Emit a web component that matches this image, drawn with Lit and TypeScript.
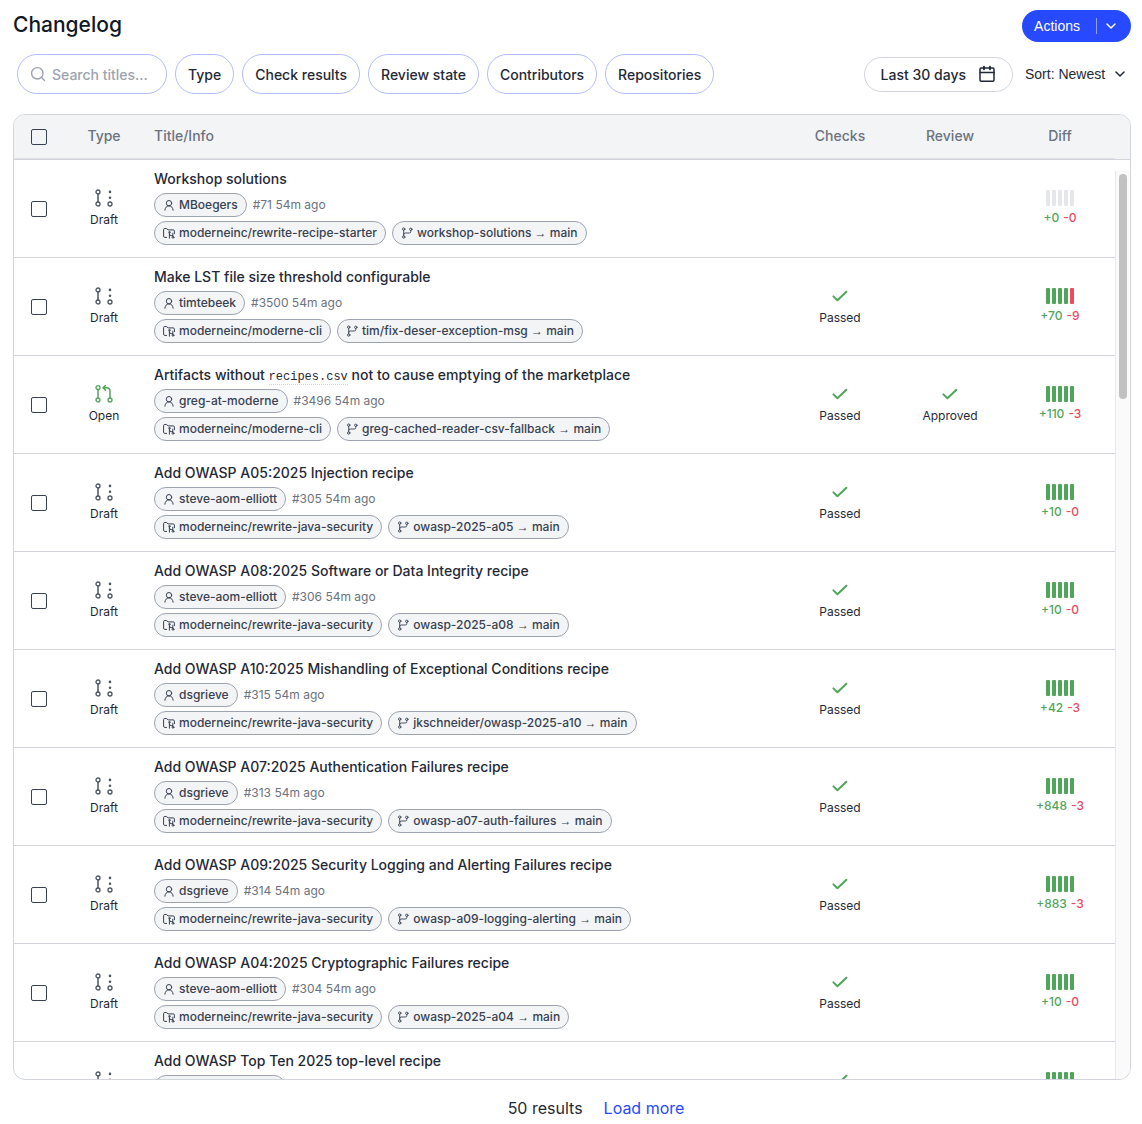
import { LitElement, html, css, svg, nothing, TemplateResult } from 'lit';
import { customElement, property } from 'lit/decorators.js';
import { classMap } from 'lit/directives/class-map.js';

interface Change {
  title: string | TemplateResult;
  type: 'Draft' | 'Open';
  author: string;
  number: number;
  repo: string;
  branch: string;
  checks?: string;
  review?: string;
  added: number;
  removed: number;
  bars: string; // one letter per bar: g = added, r = removed, n = neutral
}

const JAVA_SECURITY = 'moderneinc/rewrite-java-security';

const CHANGES: Change[] = [
  { title: 'Workshop solutions', type: 'Draft', author: 'MBoegers', number: 71, repo: 'moderneinc/rewrite-recipe-starter', branch: 'workshop-solutions', added: 0, removed: 0, bars: 'nnnnn' },
  { title: 'Make LST file size threshold configurable', type: 'Draft', author: 'timtebeek', number: 3500, repo: 'moderneinc/moderne-cli', branch: 'tim/fix-deser-exception-msg', checks: 'Passed', added: 70, removed: 9, bars: 'ggggr' },
  { title: html`Artifacts without <code>recipes.csv</code> not to cause emptying of the marketplace`, type: 'Open', author: 'greg-at-moderne', number: 3496, repo: 'moderneinc/moderne-cli', branch: 'greg-cached-reader-csv-fallback', checks: 'Passed', review: 'Approved', added: 110, removed: 3, bars: 'ggggg' },
  { title: 'Add OWASP A05:2025 Injection recipe', type: 'Draft', author: 'steve-aom-elliott', number: 305, repo: JAVA_SECURITY, branch: 'owasp-2025-a05', checks: 'Passed', added: 10, removed: 0, bars: 'ggggg' },
  { title: 'Add OWASP A08:2025 Software or Data Integrity recipe', type: 'Draft', author: 'steve-aom-elliott', number: 306, repo: JAVA_SECURITY, branch: 'owasp-2025-a08', checks: 'Passed', added: 10, removed: 0, bars: 'ggggg' },
  { title: 'Add OWASP A10:2025 Mishandling of Exceptional Conditions recipe', type: 'Draft', author: 'dsgrieve', number: 315, repo: JAVA_SECURITY, branch: 'jkschneider/owasp-2025-a10', checks: 'Passed', added: 42, removed: 3, bars: 'ggggg' },
  { title: 'Add OWASP A07:2025 Authentication Failures recipe', type: 'Draft', author: 'dsgrieve', number: 313, repo: JAVA_SECURITY, branch: 'owasp-a07-auth-failures', checks: 'Passed', added: 848, removed: 3, bars: 'ggggg' },
  { title: 'Add OWASP A09:2025 Security Logging and Alerting Failures recipe', type: 'Draft', author: 'dsgrieve', number: 314, repo: JAVA_SECURITY, branch: 'owasp-a09-logging-alerting', checks: 'Passed', added: 883, removed: 3, bars: 'ggggg' },
  { title: 'Add OWASP A04:2025 Cryptographic Failures recipe', type: 'Draft', author: 'steve-aom-elliott', number: 304, repo: JAVA_SECURITY, branch: 'owasp-2025-a04', checks: 'Passed', added: 10, removed: 0, bars: 'ggggg' },
  { title: 'Add OWASP Top Ten 2025 top-level recipe', type: 'Draft', author: 'steve-aom-elliott', number: 303, repo: JAVA_SECURITY, branch: 'owasp-2025-top-ten', checks: 'Passed', added: 10, removed: 0, bars: 'ggggg' },
];

const FILTERS = ['Type', 'Check results', 'Review state', 'Contributors', 'Repositories'];

const ICONS: Record<string, { size: number; stroke: number; body: TemplateResult }> = {
  search: {
    size: 16,
    stroke: 1.4,
    body: svg`<circle cx="7.3" cy="7.3" r="5.7" /><path d="M11.5 11.5l3 3" />`,
  },
  calendar: {
    size: 18,
    stroke: 1.5,
    body: svg`<rect x="2" y="3" width="14" height="13.2" rx="1.2" /><path d="M2 7.4h14" /><path d="M6 1.8v2.4M12 1.8v2.4" stroke-width="1.9" />`,
  },
  chevron: {
    size: 12,
    stroke: 1.5,
    body: svg`<path d="M2 4l4 4 4-4" />`,
  },
  check: {
    size: 20,
    stroke: 2,
    body: svg`<path d="M3.4 10.4l4 3.9L16.4 5.8" />`,
  },
  draft: {
    size: 20,
    stroke: 1.3,
    body: svg`<circle cx="4" cy="4" r="2" /><circle cx="4" cy="16" r="2" /><circle cx="16" cy="16" r="2" />
      <path d="M4 6v8" stroke-width="1.5" /><path d="M16 3.9v.1M16 9.7v.1" stroke-width="2.6" />`,
  },
  open: {
    size: 20,
    stroke: 1.3,
    body: svg`<circle cx="4" cy="3.6" r="2" /><circle cx="4" cy="16" r="2" /><circle cx="16" cy="16" r="2" />
      <path d="M4 5.6V14M16 14V7.2q0-3.4-3.4-3.4H9.2M11.4 1.5L9 3.8l2.4 2.3" stroke-width="1.5" />`,
  },
  person: {
    size: 12,
    stroke: 1,
    body: svg`<circle cx="6" cy="4.2" r="2.7" /><path d="M1.9 11.2q.3-4.1 4.1-4.3q3.8.2 4.1 4.3" />`,
  },
  repo: {
    size: 12,
    stroke: 1,
    body: svg`<path d="M3.6 10.4H1.8Q.6 10.4.6 9.2V2.6Q.6 1.5 1.8 1.5H3.6L5 2.9h5.2q1.2 0 1.2 1.2v2.6" />
      <circle cx="6.4" cy="5.2" r=".7" /><circle cx="10" cy="10.3" r=".9" /><path d="M6.4 6v5.2M6.4 7.2q.2 1.4 1.8 1.4h1.4M9.8 6.2v3" />`,
  },
  branch: {
    size: 12,
    stroke: 0.9,
    body: svg`<circle cx="2.7" cy="2.1" r="1.2" /><circle cx="2.7" cy="10" r="1.2" /><circle cx="9.8" cy="2.3" r="1.2" />
      <path d="M2.7 3.3v5.5M9.8 3.5v1q0 1.5-1.5 1.5H4.2Q2.7 6 2.7 7.4" />`,
  },
};

@customElement('app-icon')
export class AppIcon extends LitElement {
  @property({ type: String }) name = 'search';

  static styles = css`
    :host {
      display: inline-flex;
      flex: none;
    }
    svg {
      display: block;
      fill: none;
      stroke: currentColor;
      stroke-linecap: round;
      stroke-linejoin: round;
    }
  `;

  render() {
    const icon = ICONS[this.name];
    return html`
      <svg
        width=${icon.size}
        height=${icon.size}
        viewBox="0 0 ${icon.size} ${icon.size}"
        stroke-width=${icon.stroke}
        aria-hidden="true"
      >
        ${icon.body}
      </svg>
    `;
  }
}

@customElement('diff-stat')
export class DiffStat extends LitElement {
  @property({ type: Number }) added = 0;
  @property({ type: Number }) removed = 0;
  @property({ type: String }) bars = 'nnnnn';

  static styles = css`
    :host {
      display: flex;
      flex-direction: column;
      align-items: center;
      gap: 4px;
      padding-bottom: 1px;
      font-size: 12px;
      font-weight: 500;
      line-height: 16px;
    }
    .bars {
      display: flex;
      gap: 2px;
    }
    .bar {
      width: 4px;
      height: 16px;
      border-radius: 1px;
      background: #e5e7eb;
    }
    .bar.g {
      background: #4fa65b;
    }
    .bar.r {
      background: #ee4a5f;
    }
    .counts {
      display: flex;
      gap: 4px;
    }
    .added {
      color: #4fa65b;
    }
    .removed {
      color: #ee4a5f;
    }
  `;

  render() {
    return html`
      <div class="bars">
        ${[...this.bars].map((b) => html`<span class=${classMap({ bar: true, [b]: true })}></span>`)}
      </div>
      <div class="counts">
        <span class="added">+${this.added}</span>
        <span class="removed">-${this.removed}</span>
      </div>
    `;
  }
}

@customElement('app-root')
export class AppRoot extends LitElement {
  static styles = css`
    :host {
      display: flex;
      flex-direction: column;
      box-sizing: border-box;
      height: 100vh;
      padding: 10px 11px 0 13px;
      background: #fff;
      color: #1f2937;
      font-family: Inter, sans-serif;
      font-size: 14px;
    }
    * {
      box-sizing: border-box;
    }
    button,
    input,
    select {
      font: inherit;
      color: inherit;
      margin: 0;
    }
    button,
    select {
      cursor: pointer;
    }
    .head {
      display: flex;
      align-items: flex-start;
      justify-content: space-between;
      height: 32px;
    }
    h1 {
      margin: 0;
      color: #111827;
      font-size: 21px;
      font-weight: 500;
      line-height: 30px;
    }
    .actions {
      display: flex;
      align-items: center;
      height: 32px;
      padding: 0 14px 0 12px;
      border: none;
      border-radius: 16px;
      background: #2749ff;
      color: #fff;
      font-family: 'Liberation Sans', sans-serif;
    }
    .divider {
      width: 1px;
      height: 16px;
      margin: 0 8px 0 16px;
      background: #8fa0ff;
    }

    /* Filters */
    .toolbar {
      display: flex;
      align-items: center;
      gap: 8px;
      margin: 12px 0 20px;
      padding-left: 4px;
      font-weight: 500;
    }
    .search {
      display: flex;
      align-items: center;
      gap: 6px;
      width: 150px;
      height: 40px;
      padding: 0 12px;
      border: 1px solid #b4bcff;
      border-radius: 20px;
      color: #9ca3af;
    }
    .search input {
      flex: 1;
      min-width: 0;
      padding: 0;
      border: none;
      outline: none;
      background: none;
      color: #1f2937;
    }
    .search input::placeholder {
      color: #9ca3af;
      opacity: 1;
    }
    .filter {
      height: 40px;
      padding: 0 12px;
      border: 1px solid #b4bcff;
      border-radius: 20px;
      background: #fff;
      white-space: nowrap;
    }
    .range {
      display: flex;
      align-items: center;
      gap: 12px;
      height: 35px;
      margin-left: auto;
      padding: 0 16px;
      border: 1px solid #d1d5db;
      border-radius: 18px;
      background: #fff;
      white-space: nowrap;
    }
    .sort {
      display: flex;
      position: relative;
      align-items: center;
      margin-left: 4px;
    }
    .sort select {
      appearance: none;
      padding: 0 25px 0 0;
      border: none;
      background: none;
      font-family: 'Liberation Sans', sans-serif;
      font-weight: 400;
      line-height: 20px;
    }
    .sort app-icon {
      position: absolute;
      right: 5px;
      pointer-events: none;
    }

    /* Table */
    .panel {
      display: flex;
      flex: 1;
      min-height: 0;
      overflow: hidden;
      border: 1px solid #d1d5db;
      border-radius: 12px;
    }
    .scroller {
      flex: 1;
      min-width: 0;
      overflow-y: auto;
      scrollbar-width: none;
    }
    .gutter {
      display: flex;
      flex-direction: column;
      width: 15px;
    }
    .gutter-head {
      height: 45px;
      border-bottom: 1px solid #d1d5db;
      background: #f3f4f6;
    }
    .track {
      flex: 1;
      margin-top: 11px;
      padding: 3px;
      border-left: 1px solid #e8e8e8;
      background: #fafafa;
    }
    .thumb {
      width: 8px;
      height: 225px;
      border-radius: 4px;
      background: #c1c1c1;
    }
    table {
      width: 100%;
      border-collapse: separate;
      border-spacing: 0;
      table-layout: fixed;
    }
    th {
      position: sticky;
      top: 0;
      z-index: 1;
      height: 45px;
      padding: 0 0 3px;
      border-bottom: 1px solid #d1d5db;
      background: #f3f4f6;
      box-shadow: inset 0 -1px #dfe1e5;
      color: #6b7280;
      font-weight: 500;
    }
    td {
      height: 98px;
      padding: 0;
      border-bottom: 1px solid #d1d5db;
      text-align: center;
    }
    .col-select {
      width: 50px;
      padding: 0;
    }
    .col-type {
      width: 80px;
    }
    .col-stat {
      width: 110px;
    }
    th.info,
    td.info {
      padding-left: 10px;
      text-align: left;
    }
    td.info {
      padding-top: 9px;
      vertical-align: top;
    }
    input[type='checkbox'] {
      display: block;
      appearance: none;
      width: 16px;
      height: 16px;
      margin: 0 auto;
      border: 1px solid #374151;
      border-radius: 2px;
      background: #fff;
    }
    th input[type='checkbox'] {
      background: none;
    }
    .status {
      display: flex;
      flex-direction: column;
      align-items: center;
      gap: 4px;
      padding-bottom: 1px;
      font-size: 12px;
      line-height: 16px;
    }
    .status app-icon {
      color: #4b5563;
    }
    .status.good app-icon {
      color: #4fa65b;
    }
    .title {
      height: 20px;
      margin-bottom: 4px;
      font-weight: 500;
      line-height: 20px;
      white-space: nowrap;
    }
    .title code {
      border-bottom: 1px dotted #d1d5db;
      font-family: 'Liberation Mono', monospace;
      font-size: 12px;
      font-weight: 400;
    }
    .chips {
      display: flex;
      align-items: center;
      gap: 6px;
      margin-bottom: 4px;
      color: #6b7280;
      font-size: 12px;
      line-height: 16px;
      white-space: nowrap;
    }
    .chip {
      display: inline-flex;
      align-items: center;
      gap: 4px;
      height: 24px;
      padding: 0 8px;
      border: 1px solid #9ca3af;
      border-radius: 12px;
      background: #f3f4f6;
      color: #374151;
      font-weight: 500;
    }
    .arrow {
      font-family: 'Liberation Serif', serif;
      font-weight: 400;
      line-height: 1;
    }

    .foot {
      display: flex;
      justify-content: center;
      gap: 21px;
      padding: 16px 0 4px 48px;
      font-size: 16px;
      line-height: 24px;
    }
    .foot a {
      color: #2749ff;
      text-decoration: none;
    }
  `;

  private _renderChip(icon: string, text: string | TemplateResult) {
    return html`<span class="chip"><app-icon name=${icon}></app-icon><span>${text}</span></span>`;
  }

  private _renderStatus(icon: string, text: string | undefined, good: boolean) {
    if (!text) {
      return nothing;
    }
    return html`
      <div class=${classMap({ status: true, good })}>
        <app-icon name=${icon}></app-icon>
        <span>${text}</span>
      </div>
    `;
  }

  private _renderRow(change: Change) {
    const open = change.type === 'Open';
    return html`
      <tr>
        <td><input type="checkbox" aria-label="Select #${change.number}" /></td>
        <td>${this._renderStatus(open ? 'open' : 'draft', change.type, open)}</td>
        <td class="info">
          <div class="title">${change.title}</div>
          <div class="chips">
            ${this._renderChip('person', change.author)}
            <span>#${change.number} 54m ago</span>
          </div>
          <div class="chips">
            ${this._renderChip('repo', change.repo)}
            ${this._renderChip('branch', html`${change.branch} <span class="arrow">→</span> main`)}
          </div>
        </td>
        <td>${this._renderStatus('check', change.checks, true)}</td>
        <td>${this._renderStatus('check', change.review, true)}</td>
        <td>
          <diff-stat .added=${change.added} .removed=${change.removed} .bars=${change.bars}></diff-stat>
        </td>
      </tr>
    `;
  }

  render() {
    return html`
      <header class="head">
        <h1>Changelog</h1>
        <button class="actions">Actions<span class="divider"></span><app-icon name="chevron"></app-icon></button>
      </header>

      <div class="toolbar">
        <label class="search">
          <app-icon name="search"></app-icon>
          <input type="text" placeholder="Search titles..." aria-label="Search titles" />
        </label>
        ${FILTERS.map((name) => html`<button class="filter">${name}</button>`)}
        <button class="range">Last 30 days<app-icon name="calendar"></app-icon></button>
        <div class="sort">
          <select aria-label="Sort">
            <option>Sort: Newest</option>
            <option>Sort: Oldest</option>
          </select>
          <app-icon name="chevron"></app-icon>
        </div>
      </div>

      <main class="panel">
        <div class="scroller">
          <table>
            <thead>
              <tr>
                <th class="col-select"><input type="checkbox" aria-label="Select all" /></th>
                <th class="col-type">Type</th>
                <th class="info">Title/Info</th>
                <th class="col-stat">Checks</th>
                <th class="col-stat">Review</th>
                <th class="col-stat">Diff</th>
              </tr>
            </thead>
            <tbody>
              ${CHANGES.map((change) => this._renderRow(change))}
            </tbody>
          </table>
        </div>
        <div class="gutter" aria-hidden="true">
          <div class="gutter-head"></div>
          <div class="track"><div class="thumb"></div></div>
        </div>
      </main>

      <footer class="foot">
        <span>50 results</span>
        <a href="#more">Load more</a>
      </footer>
    `;
  }
}

declare global {
  interface HTMLElementTagNameMap {
    'app-icon': AppIcon;
    'diff-stat': DiffStat;
    'app-root': AppRoot;
  }
}
